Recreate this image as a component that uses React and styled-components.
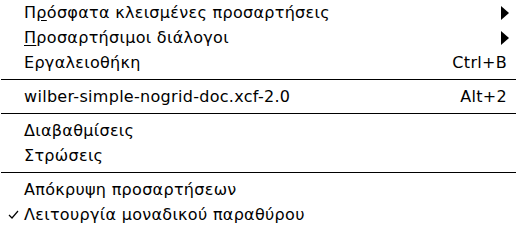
import styled, { createGlobalStyle } from "styled-components";

const GlobalStyle = createGlobalStyle`
  html, body {
    margin: 0;
    padding: 0;
    background: #ffffff;
  }
  body {
    font-family: "DejaVu Sans", sans-serif;
  }
`;

const Menu = styled.div`
  width: 516px;
  height: 228px;
  display: flex;
  flex-direction: column;
  background: #ffffff;
  color: #000000;
  font-size: 16px;
  letter-spacing: 0.3px;
  overflow: hidden;
`;

const Item = styled.div`
  display: grid;
  grid-template-columns: 24px 1fr auto;
  align-items: center;
  height: 25px;
  line-height: 25px;
  padding-right: 8px;
`;

const Check = styled.span`
  display: flex;
  justify-content: center;
  padding-left: 2px;
`;

const Label = styled.span`
  white-space: nowrap;
`;

const Mnemonic = styled.span`
  text-decoration: underline;
  text-underline-offset: 2px;
`;

const Accel = styled.span`
  white-space: nowrap;
  margin-right: 1px;
`;

const Arrow = styled.span`
  width: 0;
  height: 0;
  border-top: 7px solid transparent;
  border-bottom: 7px solid transparent;
  border-left: 8px solid #000;
  margin-right: -1px;
`;

const Separator = styled.div`
  height: 9px;
  display: flex;
  align-items: center;
  padding-left: 1px;
  &::after {
    content: "";
    flex: 1;
    height: 1px;
    background: #000;
  }
`;

function CheckMark() {
  return (
    <svg width="11" height="9" viewBox="0 0 11 9">
      <path d="M1 5 L4 8 L10 1" fill="none" stroke="#000" strokeWidth="1.2" />
    </svg>
  );
}

export default function App() {
  return (
    <>
      <GlobalStyle />
      <Menu>
        <Item>
          <span />
          <Label>
            Π<Mnemonic>ρ</Mnemonic>όσφατα κλεισμένες προσαρτήσεις
          </Label>
          <Arrow />
        </Item>
        <Item>
          <span />
          <Label>
            <Mnemonic>Π</Mnemonic>ροσαρτήσιμοι διάλογοι
          </Label>
          <Arrow />
        </Item>
        <Item>
          <span />
          <Label>Εργαλειοθήκη</Label>
          <Accel>Ctrl+B</Accel>
        </Item>
        <Separator />
        <Item>
          <span />
          <Label>wilber-simple-nogrid-doc.xcf-2.0</Label>
          <Accel>Alt+2</Accel>
        </Item>
        <Separator />
        <Item>
          <span />
          <Label>Διαβαθμίσεις</Label>
        </Item>
        <Item>
          <span />
          <Label>Στρώσεις</Label>
        </Item>
        <Separator />
        <Item>
          <span />
          <Label>Απόκρυψη προσαρτήσεων</Label>
        </Item>
        <Item>
          <Check>
            <CheckMark />
          </Check>
          <Label>Λειτουργία μοναδικού παραθύρου</Label>
        </Item>
      </Menu>
    </>
  );
}
